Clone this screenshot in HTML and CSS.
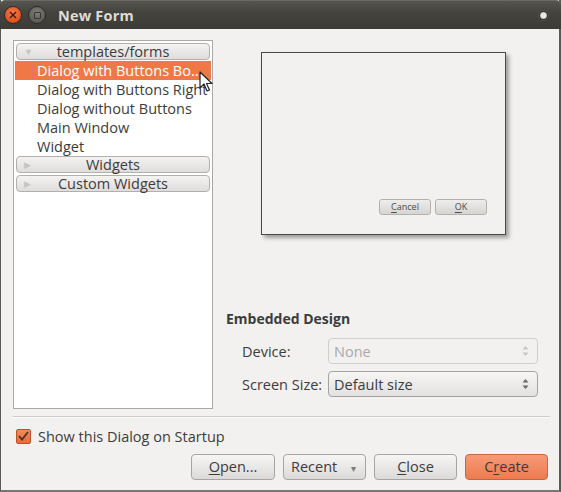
FILE: index.html
```html
<!DOCTYPE html>
<html>
<head>
<meta charset="utf-8">
<link rel="stylesheet" href="styles.css">
</head>
<body>
<div class="window">
  <div class="titlebar">
    <div class="wbtn close"><svg width="8" height="8" viewBox="0 0 8 8"><path d="M1 1L7 7M7 1L1 7" stroke="#3a1a10" stroke-width="1.4"/></svg></div>
    <div class="wbtn max"><span class="sq"></span></div>
    <div class="title">New Form</div>
    <div class="spacer"></div>
    <div class="menu-dot"></div>
  </div>
  <div class="content">
    <div class="main">
      <div class="list">
        <div class="hdr open"><span class="tri">▼</span>templates/forms</div>
        <div class="row sel"><span class="focus">Dialog with Buttons Bo..</span></div>
        <div class="row">Dialog with Buttons Right</div>
        <div class="row">Dialog without Buttons</div>
        <div class="row">Main Window</div>
        <div class="row">Widget</div>
        <div class="hdr"><span class="tri">▶</span>Widgets</div>
        <div class="hdr second"><span class="tri">▶</span>Custom Widgets</div>
        <svg class="cursor" width="14" height="22" viewBox="0 0 14 22"><path d="M1 1L1 17L5 13L8 20L10.5 19L7.5 12.5L13 12.5Z" fill="#fff" stroke="#222" stroke-width="1.2" stroke-linejoin="round"/></svg>
      </div>
      <div class="side">
        <div class="preview-area">
          <div class="preview">
            <div class="pbtns">
              <div class="pbtn"><u>C</u>ancel</div>
              <div class="pbtn"><u>O</u>K</div>
            </div>
          </div>
        </div>
        <div class="group">
          <div class="group-title">Embedded Design</div>
          <div class="field">
            <div class="label">Device:</div>
            <div class="combo disabled"><span>None</span><svg class="spin" width="7" height="12" viewBox="0 0 7 12"><path d="M3.5 1L6.5 4.5L0.5 4.5Z M3.5 11L6.5 7.5L0.5 7.5Z" fill="currentColor"/></svg></div>
          </div>
          <div class="field">
            <div class="label">Screen Size:</div>
            <div class="combo"><span>Default size</span><svg class="spin" width="7" height="12" viewBox="0 0 7 12"><path d="M3.5 1L6.5 4.5L0.5 4.5Z M3.5 11L6.5 7.5L0.5 7.5Z" fill="currentColor"/></svg></div>
          </div>
        </div>
      </div>
    </div>
    <div class="sep"></div>
    <div class="check-row">
      <div class="checkbox"><svg width="11" height="10" viewBox="0 0 11 10"><path d="M1 5L4 8.5L10 1" fill="none" stroke="#4a3228" stroke-width="1.8"/></svg></div>
      <div class="check-label">Show this Dialog on Startup</div>
    </div>
    <div class="buttons">
      <div class="btn"><u>O</u>pen...</div>
      <div class="btn recent">Recent <span class="arrow">▾</span></div>
      <div class="btn"><u>C</u>lose</div>
      <div class="btn primary">C<u>r</u>eate</div>
    </div>
  </div>
</div>
</body>
</html>
```
FILE: styles.css
```css
* { box-sizing: border-box; }
html, body { margin: 0; padding: 0; }
body {
  width: 561px; height: 492px; overflow: hidden;
  background: #f2f1f0;
  font-family: "Open Sans", "Noto Sans", sans-serif;
  color: #3c3c3c;
}
.window {
  width: 561px; height: 492px;
  background: #f2f1f0;
  border-left: 1px solid #5a5955;
  border-right: 2px solid #5a5955;
  border-bottom: 2px solid #77766f;
  display: flex; flex-direction: column;
}
.titlebar {
  height: 29px;
  margin: 0 -2px 0 -1px;
  background: linear-gradient(#56554f, #44433e 40%, #3c3b37);
  border-radius: 5px 5px 0 0;
  border-top: 1px solid #6a6964;
  display: flex; align-items: center;
  padding-left: 4px; padding-right: 12px;
  flex-shrink: 0;
}
.wbtn {
  width: 18px; height: 18px; border-radius: 50%;
  display: flex; align-items: center; justify-content: center;
  margin-right: 6px;
}
.close {
  background: radial-gradient(circle at 50% 35%, #f8794a, #e0531f 70%, #b33b12);
  border: 1px solid #2d2c29;
}
.max {
  background: radial-gradient(circle at 50% 35%, #7f7e79, #5d5c57 70%, #4a4945);
  border: 1px solid #2d2c29;
}
.sq { width: 7px; height: 7px; border: 1.5px solid #36352f; border-radius: 1px; }
.title {
  font-weight: bold; font-size: 14.5px; color: #dfdbd2;
  margin-left: 6px; letter-spacing: 0.2px;
}
.spacer { flex: 1; }
.menu-dot {
  width: 11px; height: 11px; border-radius: 50%;
  background: radial-gradient(circle, #e8e8e6 35%, #cfcfcc 45%, #2b2a27 65%);
  border: 1px solid #55544f;
}
.content {
  flex: 1;
  padding: 11px 10px 0 12px;
  display: flex; flex-direction: column;
}
.main { display: flex; height: 369px; }
.list {
  position: relative;
  width: 200px; height: 369px;
  background: #fff;
  border: 1px solid #a9a8a4;
  padding: 2px 2px 0 2px;
  font-size: 14.5px;
}
.hdr {
  position: relative;
  height: 17px; line-height: 15px;
  margin: 0 0 1px 0;
  border: 1px solid #b1b0ac;
  border-radius: 4px;
  background: linear-gradient(#f4f3f2, #dedddb);
  text-align: center;
  color: #3c3c3c;
}
.hdr.second { margin-top: 2px; }
.tri {
  position: absolute; left: 7px; top: 0;
  font-size: 9px; color: #c6c5c2;
}
.row {
  height: 19px; line-height: 19px;
  padding-left: 22px;
  margin: 0 -1px;
  white-space: nowrap;
  color: #3c3c3c;
}
.row.sel {
  background: #f07746; color: #fff;
}
.focus {
  display: inline-block; height: 19px;
  border: 1px dotted #8a9aa8;
  border-top: none; border-bottom: none;
  margin-left: -1px; padding-right: 4px;
  line-height: 19px;
}
.cursor { position: absolute; left: 185px; top: 30px; }
.side {
  flex: 1; margin-left: 13px;
  display: flex; flex-direction: column;
}
.preview-area { height: 269px; padding: 12px 0 0 35px; }
.preview {
  width: 245px; height: 183px;
  border: 1.5px solid #48474a;
  background: #f2f1f0;
  box-shadow: 3px 3px 4px rgba(0,0,0,0.35);
  display: flex; align-items: flex-end; justify-content: flex-end;
  padding: 0 18px 19px 0;
}
.pbtns { display: flex; gap: 4px; }
.pbtn {
  width: 52px; height: 16px;
  border: 1px solid #b2b1ad; border-radius: 3px;
  background: linear-gradient(#eeedeb, #d6d5d2);
  font-size: 9px; line-height: 14px; text-align: center;
  color: #4c4c4c;
}
.group { padding-left: 0; }
.group-title {
  font-weight: bold; font-size: 14px; color: #3c3c3c;
  height: 29px; line-height: 16px; padding-top: 2px;
}
.field {
  display: flex; align-items: center;
  height: 26px; margin-bottom: 7px;
  padding-left: 16px;
  font-size: 14.5px;
}
.label { width: 86px; }
.combo {
  width: 210px; height: 26px;
  border: 1px solid #a4a3a0; border-radius: 4px;
  background: linear-gradient(#f7f6f5, #e2e1df);
  display: flex; align-items: center; justify-content: space-between;
  padding: 0 8px 0 5px;
  color: #3c3c3c;
}
.combo.disabled {
  background: #f2f1f0; border-color: #d0cfcc; color: #a9a9a9;
}
.spin { color: #6a6a6a; }
.combo.disabled .spin { color: #c8c8c8; }
.sep {
  margin: 7px 0 0 0; width: 537px;
  background: #cfcdca;
  border-bottom: 1px solid #fbfbfa;
  height: 2px;
}
.check-row {
  display: flex; align-items: center;
  margin-top: 10px; padding-left: 3px;
  height: 16px;
}
.checkbox {
  width: 15px; height: 15px;
  border: 1px solid #b9542a; border-radius: 2px;
  background: linear-gradient(#f58a5e, #ea6a36);
  display: flex; align-items: center; justify-content: center;
}
.check-label { margin-left: 7px; font-size: 14.5px; }
.buttons {
  display: flex; justify-content: flex-end; gap: 8px;
  margin-top: 10px; padding-right: 1px;
}
.btn {
  width: 83px; height: 26px;
  border: 1px solid #a6a5a1; border-radius: 4px;
  background: linear-gradient(#f7f6f5, #dbdad8);
  font-size: 14.5px; line-height: 24px; text-align: center;
  color: #3c3c3c;
}
.btn:first-child { width: 84px; }
.btn.recent { text-align: left; padding-left: 7px; }
.arrow { font-size: 10px; color: #7a7a7a; margin-left: 10px; }
.btn.primary {
  background: linear-gradient(#f59a76, #ee7b50);
  border-color: #c9653f;
}
u { text-decoration-thickness: 1px; text-underline-offset: 2px; }
```
